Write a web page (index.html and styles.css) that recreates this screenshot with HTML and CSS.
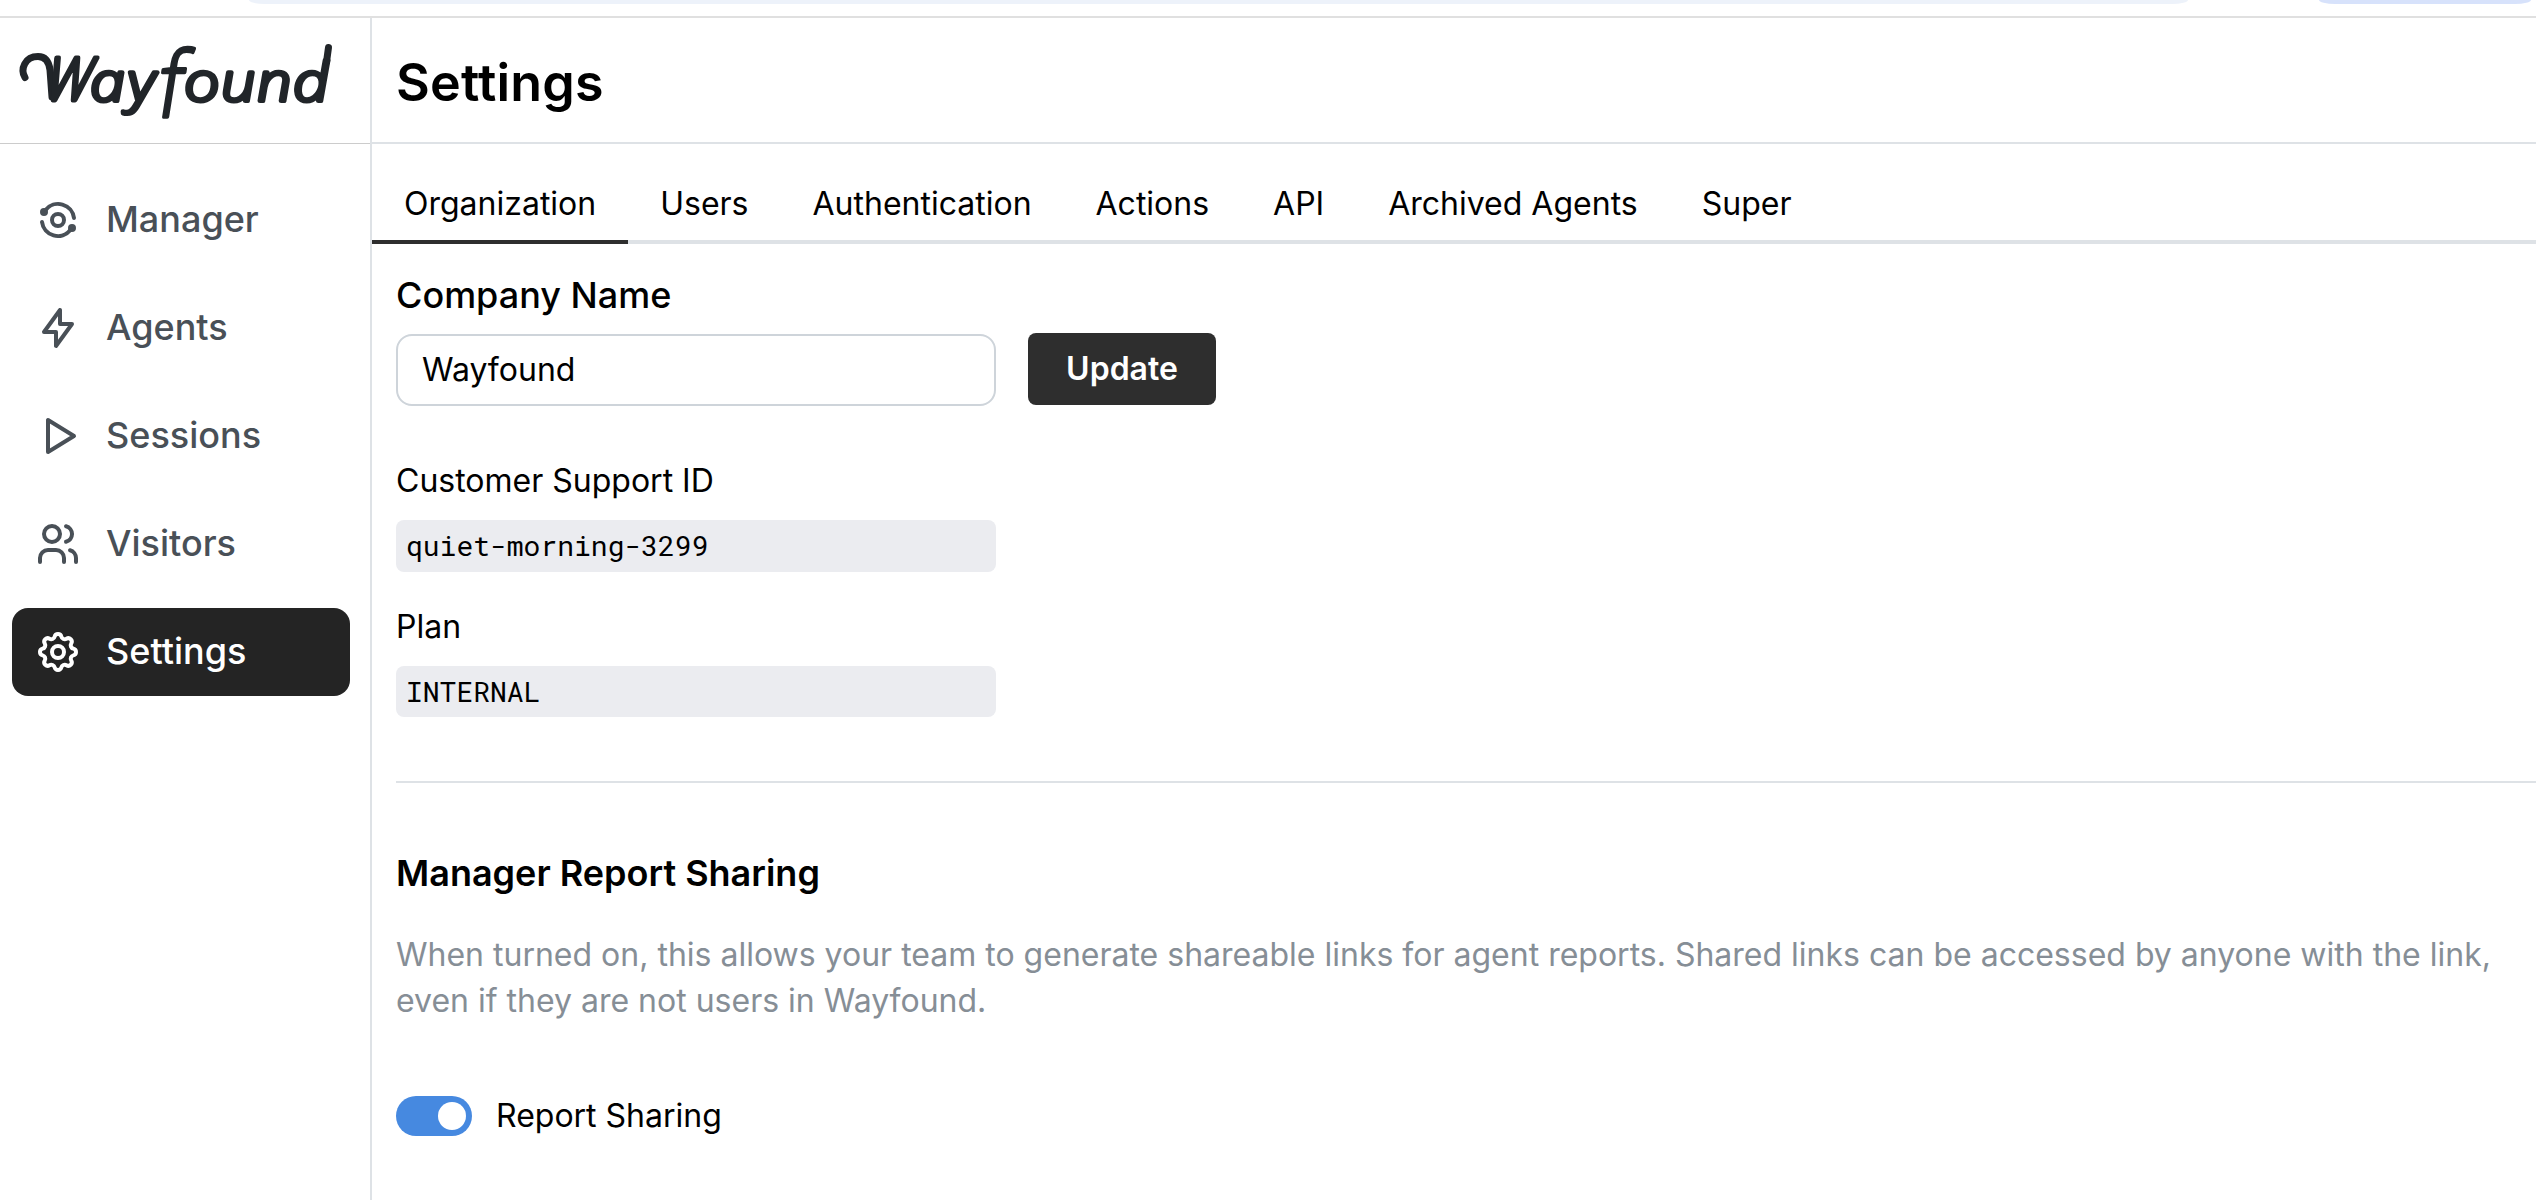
FILE: index.html
```html
<!DOCTYPE html>
<html lang="en">
<head>
<meta charset="utf-8">
<title>Settings - Wayfound</title>
<link rel="stylesheet" href="styles.css">
</head>
<body>
<div class="chrome"><div class="omnibox"></div><div class="profile"></div></div>
<div class="app">
  <aside class="sidebar">
    <div class="brand">
      <svg class="logo" width="370" height="125" viewBox="0 18 370 125" role="img" aria-label="Wayfound">
        <path class="swash" d="M25 77.500C20 69 25 56.500 38 56.500C46 56.500 49 62 50 70L52 97"/>
        <g class="word">
          <text class="cap" transform="translate(45 100) skewX(-7) scale(.88 1)">W</text>
          <text transform="translate(91 101) skewX(4) scale(1.17 1)">a</text>
          <text transform="translate(129 101) skewX(4) scale(1.17 1)">y</text>
          <text class="tall" transform="translate(154.500 117) skewX(-9) scale(.9 1)">f</text>
          <text transform="translate(185 101) skewX(4) scale(1.17 1)">o</text>
          <text transform="translate(222 101) skewX(4) scale(1.14 1)">u</text>
          <text transform="translate(258 101) skewX(4) scale(1.14 1)">n</text>
          <text transform="translate(294 101) skewX(4) scale(1.17 1)">d</text>
        </g>
        <path class="swash" d="M328.500 47.500L326.500 62"/>
      </svg>
    </div>
    <nav class="nav">
      <a class="item"><svg class="icon" viewBox="0 0 24 24"><circle cx="12" cy="12" r="3"/><circle cx="5" cy="8" r="1"/><circle cx="19" cy="16" r="1"/><path d="M5.800 7A8 8 0 0 1 20 11M4 13A8 8 0 0 0 18.200 17"/></svg><span>Manager</span></a>
      <a class="item"><svg class="icon" viewBox="0 0 24 24"><path d="M13 3v7h6l-8 11v-7H5l8-11"/></svg><span>Agents</span></a>
      <a class="item"><svg class="icon" viewBox="0 0 24 24"><path d="M7 4v16l13-8z"/></svg><span>Sessions</span></a>
      <a class="item"><svg class="icon" viewBox="0 0 24 24"><circle cx="9" cy="7" r="4"/><path d="M3 21v-2a4 4 0 0 1 4-4h4a4 4 0 0 1 4 4v2M16 3.130a4 4 0 0 1 0 7.750M21 21v-2a4 4 0 0 0-3-3.850"/></svg><span>Visitors</span></a>
      <a class="item active"><svg class="icon" viewBox="0 0 24 24"><path d="M10.325 4.317c.426-1.756 2.924-1.756 3.350 0a1.724 1.724 0 0 0 2.573 1.066c1.543-.94 3.310.826 2.370 2.370a1.724 1.724 0 0 0 1.065 2.572c1.756.426 1.756 2.924 0 3.350a1.724 1.724 0 0 0-1.066 2.573c.94 1.543-.826 3.310-2.370 2.370a1.724 1.724 0 0 0-2.572 1.065c-.426 1.756-2.924 1.756-3.350 0a1.724 1.724 0 0 0-2.573-1.066c-1.543.94-3.310-.826-2.370-2.370a1.724 1.724 0 0 0-1.065-2.572c-1.756-.426-1.756-2.924 0-3.350a1.724 1.724 0 0 0 1.066-2.573c-.94-1.543.826-3.310 2.370-2.370 1 .608 2.296.07 2.572-1.065z"/><circle cx="12" cy="12" r="3"/></svg><span>Settings</span></a>
    </nav>
  </aside>
  <main class="main">
    <header class="header"><h1>Settings</h1></header>
    <div class="tabs">
      <a class="tab selected">Organization</a><a class="tab">Users</a><a class="tab">Authentication</a><a class="tab">Actions</a><a class="tab">API</a><a class="tab">Archived Agents</a><a class="tab">Super</a>
    </div>
    <div class="content">
      <label class="name-label" for="company">Company Name</label>
      <div class="name-row">
        <input id="company" class="input" type="text" value="Wayfound">
        <button class="button">Update</button>
      </div>
      <div class="field"><div class="field-label">Customer Support ID</div><div class="code">quiet-morning-3299</div></div>
      <div class="field plan"><div class="field-label">Plan</div><div class="code">INTERNAL</div></div>
      <hr class="divider">
      <h2>Manager Report Sharing</h2>
      <p class="hint">When turned on, this allows your team to generate shareable links for agent reports. Shared links can be accessed by anyone with the link, even if they are not users in Wayfound.</p>
      <div class="switch-row"><div class="switch"><div class="thumb"></div></div><span class="switch-label">Report Sharing</span></div>
    </div>
  </main>
</div>
</body>
</html>
```
FILE: styles.css
```css
* { box-sizing: border-box; }
body {
  margin: 0;
  height: 1200px;
  overflow: hidden;
  background: #fff;
  color: #000;
  font-family: Inter, sans-serif;
  font-size: 32px;
}

/* bottom edge of the browser toolbar */
.chrome {
  display: flex;
  height: 18px;
  padding-left: 249px;
  border-bottom: 2px solid #e0e0e0;
  gap: 131px;
}
.omnibox { width: 1939px; height: 4px; background: #edf2fa; border-radius: 0 0 16px 16px / 0 0 4px 4px; }
.profile { width: 212px; height: 4px; background: #d7e2fb; border-radius: 0 0 16px 16px / 0 0 4px 4px; }

.app { display: flex; height: 1182px; }
.sidebar { width: 372px; flex: none; border-right: 2px solid #dee2e6; }
.brand { height: 126px; border-bottom: 1px solid #ccc; }
.logo { display: block; }
.word {
  font-family: "Open Sans", sans-serif;
  font-style: italic;
  font-weight: 300;
  font-size: 54px;
  fill: #212529;
  stroke: #212529;
  stroke-width: 4;
  stroke-linejoin: round;
}
.cap { font-size: 59px; stroke-width: 4.8; }
.tall { font-size: 91px; font-style: normal; stroke-width: 3.4; }
.swash { fill: none; stroke: #212529; stroke-width: 7; stroke-linecap: round; stroke-linejoin: round; }

.nav { display: flex; flex-direction: column; gap: 20px; padding: 32px 20px 0 12px; }
.item {
  display: flex;
  align-items: center;
  gap: 24px;
  height: 88px;
  padding-left: 22px;
  border-radius: 16px;
  color: #495057;
  font-size: 36px;
  font-weight: 500;
}
.item span { padding-bottom: 2px; }
.item.active { background: #242424; color: #fff; }
.icon { width: 48px; height: 48px; fill: none; stroke: currentColor; stroke-width: 2; stroke-linecap: round; stroke-linejoin: round; }

.main { flex: 1; min-width: 0; }
.header { height: 126px; padding: 5px 0 0 24px; border-bottom: 2px solid #dee2e6; display: flex; align-items: center; }
h1 { margin: 0; font-size: 52px; font-weight: 600; line-height: 64px; letter-spacing: .2px; }
.tabs { display: flex; height: 100px; border-bottom: 4px solid #dee2e6; padding-top: 24px; }
.tab { padding: 16px 32px 0; height: 76px; line-height: 40px; }
.tab.selected { border-bottom: 4px solid #2e2e2e; }

.content { padding: 28px 0 0 24px; display: flex; flex-direction: column; }
.name-label { font-size: 36px; font-weight: 500; line-height: 46px; }
.name-row { display: flex; gap: 32px; margin-top: 15px; }
.input { width: 600px; height: 72px; margin-top: 1px; padding: 0 24px 1px; border: 2px solid #ced4da; border-radius: 16px; font: inherit; color: #000; background: #fff; }
.button { width: 188px; height: 72px; border: 0; border-radius: 8px; background: #2e2e2e; color: #fff; font: 600 32px Inter, sans-serif; padding: 0 0 1px; }
.field { margin-top: 50px; }
.field.plan { margin-top: 30px; }
.field-label { line-height: 49px; }
.code {
  width: 600px;
  height: 52px;
  margin-top: 15px;
  padding-left: 10px;
  border-radius: 8px;
  background: #ebecf0;
  font: 28px/51px "Roboto Mono", "DejaVu Sans Mono", monospace;
}
.plan .code { height: 51px; }
.divider { width: 100%; height: 2px; margin: 64px 0 0; border: 0; background: #dee2e6; }
h2 { margin: 66px 0 0; font-size: 36px; font-weight: 600; line-height: 48px; }
.hint { margin: 35px 0 0; padding-right: 32px; color: #868e96; line-height: 46px; }
.switch-row { display: flex; align-items: center; gap: 24px; margin-top: 72px; }
.switch { display: flex; align-items: center; justify-content: flex-end; width: 76px; height: 40px; padding-right: 6px; border-radius: 20px; background: #4689e0; }
.switch-label { padding-bottom: 1px; }
.thumb { width: 28px; height: 28px; border-radius: 50%; background: #fff; }
```
